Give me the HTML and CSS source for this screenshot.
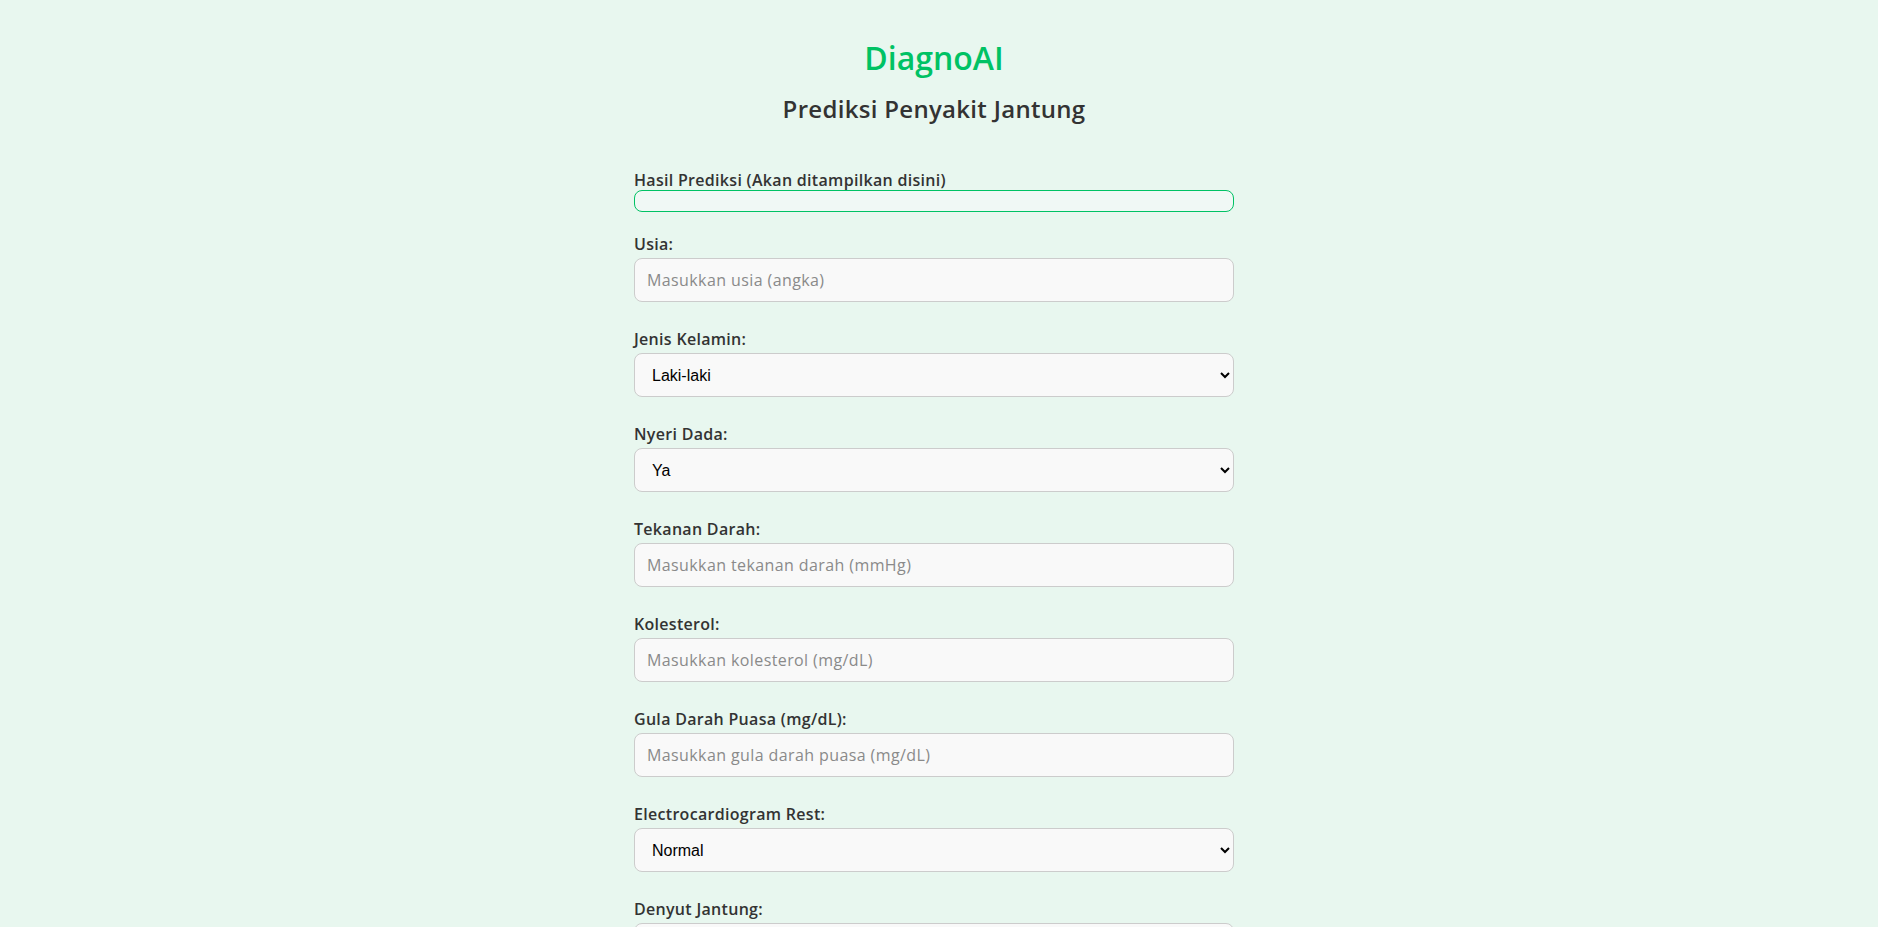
FILE: index.html
```html
<!DOCTYPE html>
<html lang="id">
<head>
<meta charset="utf-8">
<title>DiagnoAI - Prediksi Penyakit Jantung</title>
<link rel="stylesheet" href="styles.css">
</head>
<body>
<div class="container">
  <h1 class="brand">DiagnoAI</h1>
  <h2 class="subtitle">Prediksi Penyakit Jantung</h2>
  <form class="form">
    <div class="group group-result">
      <label class="label">Hasil Prediksi (Akan ditampilkan disini)</label>
      <div class="result"></div>
    </div>
    <div class="group">
      <label class="label" for="usia">Usia:</label>
      <input class="field" id="usia" type="text" placeholder="Masukkan usia (angka)">
    </div>
    <div class="group">
      <label class="label" for="jk">Jenis Kelamin:</label>
      <select class="field select" id="jk"><option>Laki-laki</option><option>Perempuan</option></select>
    </div>
    <div class="group">
      <label class="label" for="nd">Nyeri Dada:</label>
      <select class="field select" id="nd"><option>Ya</option><option>Tidak</option></select>
    </div>
    <div class="group">
      <label class="label" for="td">Tekanan Darah:</label>
      <input class="field" id="td" type="text" placeholder="Masukkan tekanan darah (mmHg)">
    </div>
    <div class="group">
      <label class="label" for="kol">Kolesterol:</label>
      <input class="field" id="kol" type="text" placeholder="Masukkan kolesterol (mg/dL)">
    </div>
    <div class="group">
      <label class="label" for="gdp">Gula Darah Puasa (mg/dL):</label>
      <input class="field" id="gdp" type="text" placeholder="Masukkan gula darah puasa (mg/dL)">
    </div>
    <div class="group">
      <label class="label" for="ecg">Electrocardiogram Rest:</label>
      <select class="field select" id="ecg"><option>Normal</option><option>Abnormal</option></select>
    </div>
    <div class="group">
      <label class="label" for="dj">Denyut Jantung:</label>
      <input class="field" id="dj" type="text" placeholder="Masukkan denyut jantung (bpm)">
    </div>
  </form>
</div>
</body>
</html>
```
FILE: styles.css
```css
html, body {
  margin: 0;
  padding: 0;
}
body {
  background: #e8f7ef;
  font-family: "Open Sans", "Noto Sans", sans-serif;
  color: #333333;
}
.container {
  width: 600px;
  margin-left: calc(50% - 305px);
  padding-top: 38px;
}
.brand {
  margin: 0;
  text-align: center;
  font-size: 32px;
  line-height: 40px;
  font-weight: 600;
  color: #00c264;
}
.subtitle {
  margin: 16px 0 0;
  text-align: center;
  font-size: 24px;
  line-height: 30px;
  font-weight: 600;
  letter-spacing: 0.3px;
  color: #333333;
}
.form {
  margin-top: 46px;
  display: flex;
  flex-direction: column;
  gap: 27px;
}
.group {
  display: flex;
  flex-direction: column;
  gap: 4px;
}
.group-result {
  gap: 0;
  margin-bottom: -5px;
}
.label {
  font-size: 16px;
  line-height: 20px;
  font-weight: 600;
  letter-spacing: 0.3px;
  color: #333333;
}
.result {
  height: 22px;
  box-sizing: border-box;
  border: 1px solid #00c264;
  border-radius: 8px;
  background: #f0f8f5;
}
.field {
  box-sizing: border-box;
  width: 100%;
  height: 44px;
  margin: 0;
  padding: 0 12px;
  border: 1px solid #cccccc;
  border-radius: 8px;
  background: #f9f9f9;
  font-family: "Open Sans", "Noto Sans", sans-serif;
  font-size: 16px;
  letter-spacing: 0.4px;
  color: #333333;
  outline: none;
}
.field::placeholder {
  color: #8a8a8a;
}
.select {
  font-family: "Liberation Sans", Arial, sans-serif;
  letter-spacing: 0;
  color: #000000;
  padding: 0 13px;
}
```
